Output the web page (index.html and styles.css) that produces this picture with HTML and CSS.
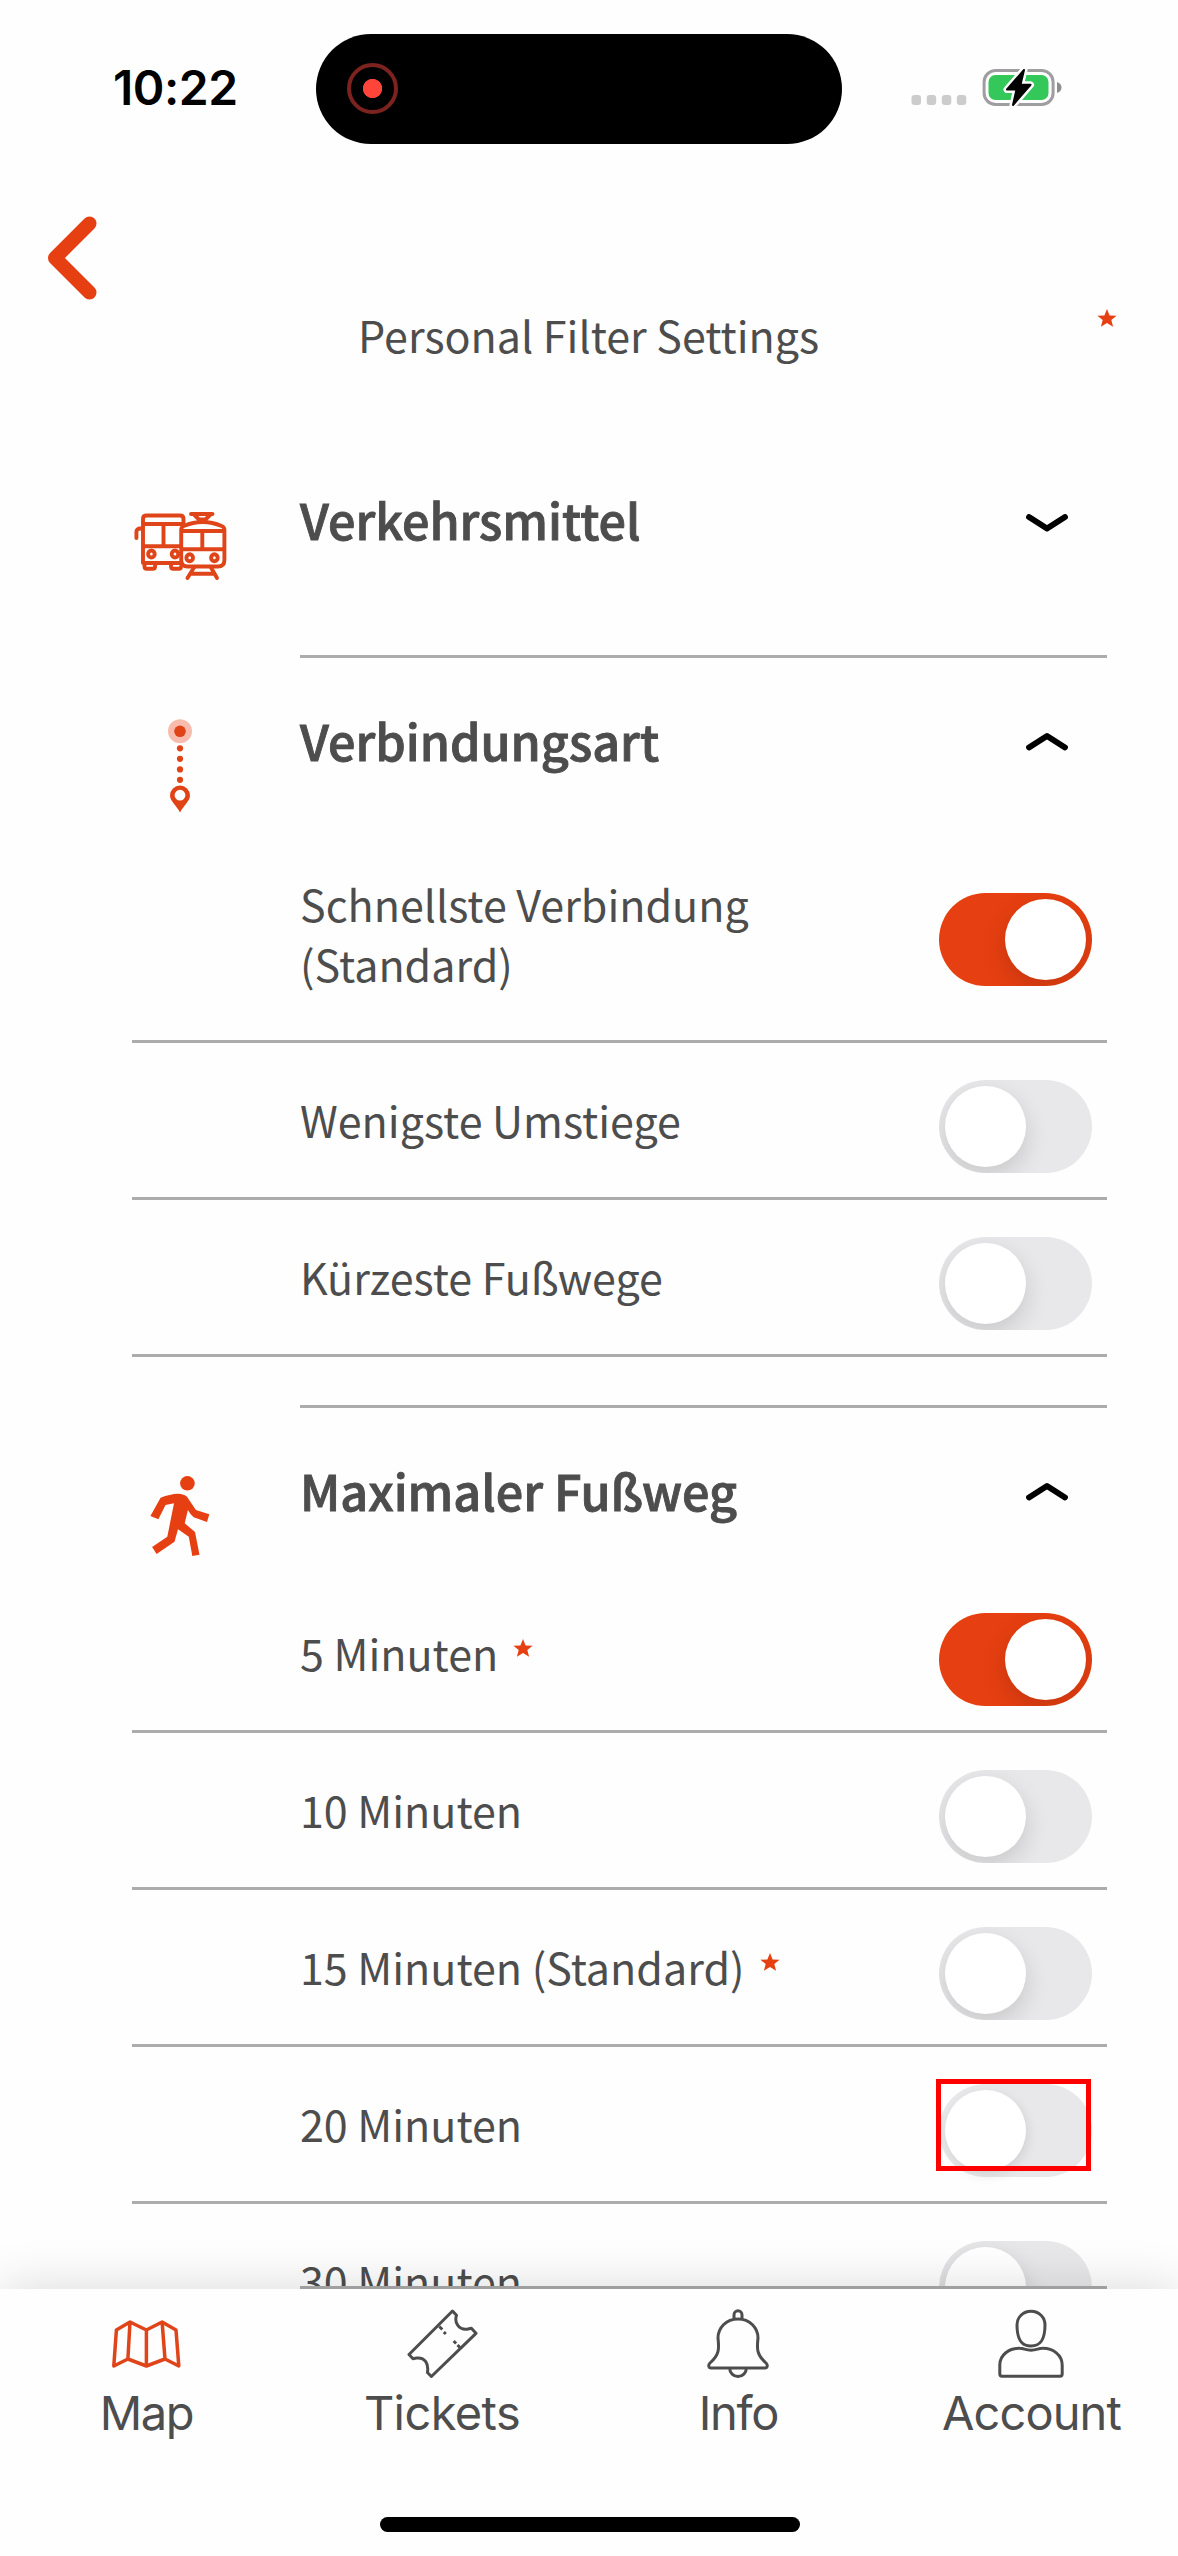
FILE: index.html
```html
<!DOCTYPE html>
<html lang="de">
<head>
<meta charset="utf-8">
<title>Personal Filter Settings</title>
<link rel="stylesheet" href="styles.css">
</head>
<body>
<div class="screen">
  <div class="status">
    <div class="time">10:22</div>
    <div class="island"><span class="rec"></span></div>
    <svg class="indicators" width="152" height="42" viewBox="0 0 152 42">
      <g fill="#ccc"><rect x="1.5" y="28" width="9.5" height="10" rx="3"/><rect x="16.7" y="28" width="9.5" height="10" rx="3"/><rect x="31.8" y="28" width="9.5" height="10" rx="3"/><rect x="46.8" y="28" width="9.5" height="10" rx="3"/></g>
      <rect x="74.1" y="3.5" width="69" height="34" rx="11.5" fill="#fff" stroke="#a09da0" stroke-width="3"/>
      <rect x="78.5" y="8" width="60" height="25" rx="7" fill="#34c759"/>
      <path d="M147 15v11q4.500-1.500 4.500-5.500t-4.500-5.500z" fill="#8e8e8e"/>
      <path d="M114 3 97 22.500H106.500L103 38 120.500 17.800H110.500z" fill="#fff" stroke="#fff" stroke-width="7" stroke-linejoin="round"/>
      <path d="M114 3 97 22.500H106.500L103 38 120.500 17.800H110.500z" fill="#000" stroke="#000" stroke-width="2" stroke-linejoin="round"/>
    </svg>
  </div>
  <header class="top">
    <svg class="back" width="60" height="90" viewBox="0 0 60 90"><path d="M46.500 10.500 12 45l34.500 34.500" fill="none" stroke="#e63f11" stroke-width="14" stroke-linecap="round" stroke-linejoin="round"/></svg>
    <h1>Personal Filter Settings</h1>
    <svg class="star" width="20" height="18" viewBox="0 0 20 18"><path d="M10 0l2.600 6.400 7 .4-5.300 4.300 1.800 6.700-6.100-3.700-6.100 3.700 1.800-6.700L.4 6.800l7-.4z"/></svg>
  </header>
  <main>
    <section class="group">
      <div class="head">
        <svg class="icon" width="96" height="96" viewBox="0 0 96 96" fill="none" stroke="#e0451a" stroke-width="3.900" stroke-linecap="round" stroke-linejoin="round">
          <path d="M48 66H11V22q0-3.500 3.500-3.500H48q3.500 0 3.500 3.500v5M11 27h39M31.500 27v22.300M11 49.300h38M4.400 41v-6q0-3.700 5.600-3.700M12.500 67v2.500q0 2.300 2.300 2.300h6q2.300 0 2.300-2.300V67M39 67v2.500q0 2.300 2.300 2.300H47q2 0 2-2"/>
          <ellipse cx="19.400" cy="57" rx="3.300" ry="3.500"/><ellipse cx="43" cy="57" rx="3.300" ry="3.500"/>
          <path d="M49.200 33q0-3 2.500-4 19-8 38 0 2.700 1 2.700 4v30q0 6.500-6.500 6.500H55.700q-6.500 0-6.500-6.500z" fill="#fff"/>
          <path d="M50 34h42M50 52.300h42M70.300 34v18M59 17h21.500M62 17.500l5 5h6.500l5-5M62 70.500 55.500 81M79 70.500 85 81M59 76.700h23"/>
          <ellipse cx="57.700" cy="60.700" rx="3.300" ry="3.500"/><ellipse cx="82.400" cy="60.700" rx="3.300" ry="3.500"/>
        </svg>
        <h2>Verkehrsmittel</h2>
        <svg class="chev down" width="42" height="18" viewBox="0 0 42 18"><path d="M3 3l18 11.500L39 3"/></svg>
      </div>
    </section>
    <section class="group">
      <div class="head">
        <svg class="icon" width="96" height="96" viewBox="0 0 96 96" fill="#e04316">
          <circle cx="48" cy="13.300" r="12" fill="#f8bcae"/><circle cx="48" cy="13.300" r="5.800"/>
          <circle cx="48" cy="30.300" r="3.100"/><circle cx="48" cy="40.800" r="3.100"/><circle cx="48" cy="51.400" r="3.100"/><circle cx="48" cy="61.800" r="3.100"/>
          <path fill-rule="evenodd" d="M48 94.500C44 87 38 83 38 77.500a10 10 0 0 1 20 0C58 83 52 87 48 94.500zM48 71.800a5.400 5.400 0 1 0 0 10.800 5.400 5.400 0 0 0 0-10.800z"/>
        </svg>
        <h2>Verbindungsart</h2>
        <svg class="chev" width="42" height="18" viewBox="0 0 42 18"><path d="M3 14.500L21 3l18 11.500"/></svg>
      </div>
      <div class="row two"><p>Schnellste Verbindung (Standard)</p><span class="toggle on"></span></div>
      <div class="row"><p>Wenigste Umstiege</p><span class="toggle"></span></div>
      <div class="row"><p>Kürzeste Fußwege</p><span class="toggle"></span></div>
    </section>
    <section class="group last">
      <div class="body">
        <div class="head">
          <svg class="icon" width="96" height="96" viewBox="0 0 96 96" fill="#e63f11">
            <circle cx="55.400" cy="15.300" r="7.300"/>
            <path d="M28.600 29.700 Q38 26 46 25.700 Q52 26 55 28.700 L63.900 42 77.300 46.300 75 54 61.700 49.300 Q58 46 55.900 42 L52.700 55.300 63 64 67.500 86.700 60.300 88 56.800 68.700 46 61.300 42.500 73.700 24.600 86 20.100 79 35.300 68.700 42 35.300 33.500 37 26.400 51.300 18.400 48z"/>
          </svg>
          <h2>Maximaler Fußweg</h2>
          <svg class="chev" width="42" height="18" viewBox="0 0 42 18"><path d="M3 14.500L21 3l18 11.500"/></svg>
        </div>
        <div class="row"><p>5 Minuten</p><svg class="star" width="20" height="18" viewBox="0 0 20 18"><path d="M10 0l2.600 6.400 7 .4-5.300 4.300 1.800 6.700-6.100-3.700-6.100 3.700 1.800-6.700L.4 6.800l7-.4z"/></svg><span class="toggle on"></span></div>
        <div class="row"><p>10 Minuten</p><span class="toggle"></span></div>
        <div class="row"><p>15 Minuten (Standard)</p><svg class="star" width="20" height="18" viewBox="0 0 20 18"><path d="M10 0l2.600 6.400 7 .4-5.300 4.300 1.800 6.700-6.100-3.700-6.100 3.700 1.800-6.700L.4 6.800l7-.4z"/></svg><span class="toggle"></span></div>
        <div class="row"><p>20 Minuten</p><span class="toggle marked"></span></div>
        <div class="row"><p>30 Minuten</p><span class="toggle"></span></div>
      </div>
    </section>
  </main>
  <nav class="tabs">
    <a class="tab map"><svg width="72" height="72" viewBox="0 0 72 72" stroke="#e0451a"><path d="M6.400 22 20 14l16.400 8L52.100 14 66 22l2.800 36L55 51l-18.600 7-18.500-7L3.800 58zM20 14l-2.100 37M36.400 22v36M52.100 14 55 51"/></svg><span>Map</span></a>
    <a class="tab tickets"><svg width="72" height="72" viewBox="0 0 72 72"><path d="M46.500 3l4 4.300C48 15 53 22 61 21.200l4.400-.9L70 25.300 25.400 68.500l-4-4C23 56 19 49 10.500 50l-3.500.7L3 46.500z"/><path d="M33.300 18.500l3 3M37.800 24l2 2M47.600 33l2.500 2.500M51.500 37l2.500 2.500"/></svg><span>Tickets</span></a>
    <a class="tab info"><svg width="72" height="72" viewBox="0 0 72 72"><path d="M32 11V7a4 4.300 0 0 1 8 0v4M36 11c12 0 20 9 20 19-1 10-2 16 8 25 2 2 1.500 5-1 5H9c-2.500 0-3-3-1-5 10-9 9-15 8-25 0-10 8-19 20-19zM27.700 60.500a8.300 8 0 0 0 16.600 0"/></svg><span>Info</span></a>
    <a class="tab account"><svg width="72" height="72" viewBox="0 0 72 72"><path d="M36 3.300c8 0 14 6 14 13.500C50 31 46 38 36 38S22 31 22 16.800C22 9.300 28 3.300 36 3.300zM7 68.300h58q2.200 0 2.200-2.200V57c0-10-9-17-20-16.700-4 0-5.500 1.900-11.200 1.900S29 40.300 25 40.300C14 40 4.800 47 4.800 57v9.100q0 2.200 2.200 2.200z"/></svg><span>Account</span></a>
    <div class="home"></div>
  </nav>
</div>
</body>
</html>
```
FILE: styles.css
```css
*, *::before, *::after { box-sizing: border-box; margin: 0; padding: 0; }
body {
  background: #fefefe;
  color: #4d4d4d;
  font-family: "Noto Sans CJK SC", "Noto Sans", sans-serif;
}
svg { display: block; flex: none; }
.screen {
  width: 1178px;
  height: 2556px;
  display: flex;
  flex-direction: column;
  overflow: hidden;
}

.status {
  height: 178px;
  display: flex;
  align-items: flex-start;
  padding: 34px 116px 0 113px;
}
.time {
  width: 203px;
  margin-top: 24px;
  color: #000;
  font: 600 48px/60px Inter, sans-serif;
  letter-spacing: -0.5px;
}
.island {
  width: 526px;
  height: 110px;
  border-radius: 55px;
  background: #000;
  padding: 29px 31px;
}
.rec {
  display: block;
  width: 51px;
  height: 51px;
  border: 4px solid #7c2320;
  border-radius: 50%;
  background: radial-gradient(circle, #ff453a 9.2px, transparent 10px);
}
.indicators { margin: 33px 0 0 68px; }

.top {
  height: 259px;
  display: grid;
  grid-template-columns: 315px 545px 1fr;
  align-items: start;
  padding: 34px 0 0 43px;
}
.back { margin-top: 1px; }
.top h1 {
  margin-top: 92px;
  font-size: 43px;
  line-height: 60px;
  font-weight: 400;
}
.top .star { margin: 97px 0 0 194px; }
.star { fill: #e63f11; }

main {
  height: 1852px;
  display: flex;
  flex-direction: column;
}
.group::after {
  content: "";
  display: block;
  height: 3px;
  margin: 48px 71px 0 300px;
  background: #acacac;
}
.group:first-child::after { margin-top: 50px; }
.head {
  height: 168px;
  display: flex;
  align-items: flex-start;
  padding: 47px 110px 0 132px;
}
.icon { margin-top: 13px; }
.head h2 {
  flex: 1;
  margin-left: 72px;
  font-size: 48.5px;
  line-height: 70px;
  font-weight: 500;
  -webkit-text-stroke: 0.9px #4d4d4d;
}
.chev { margin-top: 28px; }
.chev.down { margin-top: 30px; }
.chev path {
  fill: none;
  stroke: #000;
  stroke-width: 5.8;
  stroke-linecap: round;
  stroke-linejoin: round;
}
.last {
  flex: 1;
  min-height: 0;
  display: flex;
  flex-direction: column;
}
.last .body { flex: 1; min-height: 0; overflow: hidden; }
.last::after { margin-top: 0; }

.row {
  height: 157px;
  display: flex;
  align-items: flex-start;
  margin: 0 71px 0 132px;
  padding: 37px 15px 0 168px;
  border-bottom: 3px solid #acacac;
}
.row p {
  margin-top: 9px;
  max-width: 500px;
  font-size: 43px;
  line-height: 60px;
}
.row .star { margin: 26px 0 0 15px; }
.row.two { height: 217px; padding-top: 67px; }
.row.two p { margin-top: -20px; }

.toggle {
  flex: none;
  width: 153px;
  height: 93px;
  margin-left: auto;
  padding: 6px;
  border-radius: 46.5px;
  background: #e8e8ea;
  overflow: hidden;
}
.toggle::before {
  content: "";
  display: block;
  width: 81px;
  height: 81px;
  border-radius: 50%;
  background: #fff;
  box-shadow: 0 9px 24px rgba(0, 0, 0, 0.14);
}
.toggle.on { background: #e63f11; }
.toggle.on::before { margin-left: 60px; }
.toggle.marked { position: relative; overflow: visible; }
.toggle.marked::before { box-shadow: 2px 4px 12px rgba(0, 0, 0, 0.1); }
.toggle.marked::after {
  content: "";
  position: absolute;
  left: -3px;
  top: -5px;
  width: 155px;
  height: 92px;
  border: 5px solid #f00;
}

.tabs {
  position: relative;
  height: 267px;
  display: grid;
  grid-template-columns: 292px 300px 292px 1fr;
  align-content: start;
  padding-top: 19px;
  background: #fefefe;
  box-shadow: 0 0 48px rgba(0, 0, 0, 0.15);
}
.tab {
  display: flex;
  flex-direction: column;
  align-items: center;
  color: #4d4d4d;
  font: 400 47px/60px Inter, sans-serif;
  letter-spacing: -0.6px;
}
.tab svg { fill: none; stroke-width: 3; stroke-linejoin: round; }
.tab.map svg { stroke-width: 3.5; }
.tab:not(.map) svg { stroke: #4d4d4d; }
.tab span { margin-top: 3px; }
.map span, .info span { letter-spacing: -1.3px; margin-left: 1px; }
.account span { letter-spacing: -0.9px; margin-left: 1px; }
.home {
  grid-column: 1 / -1;
  justify-self: center;
  width: 420px;
  height: 15px;
  margin: 74px 0 0 2px;
  border-radius: 8px;
  background: #000;
}
```
